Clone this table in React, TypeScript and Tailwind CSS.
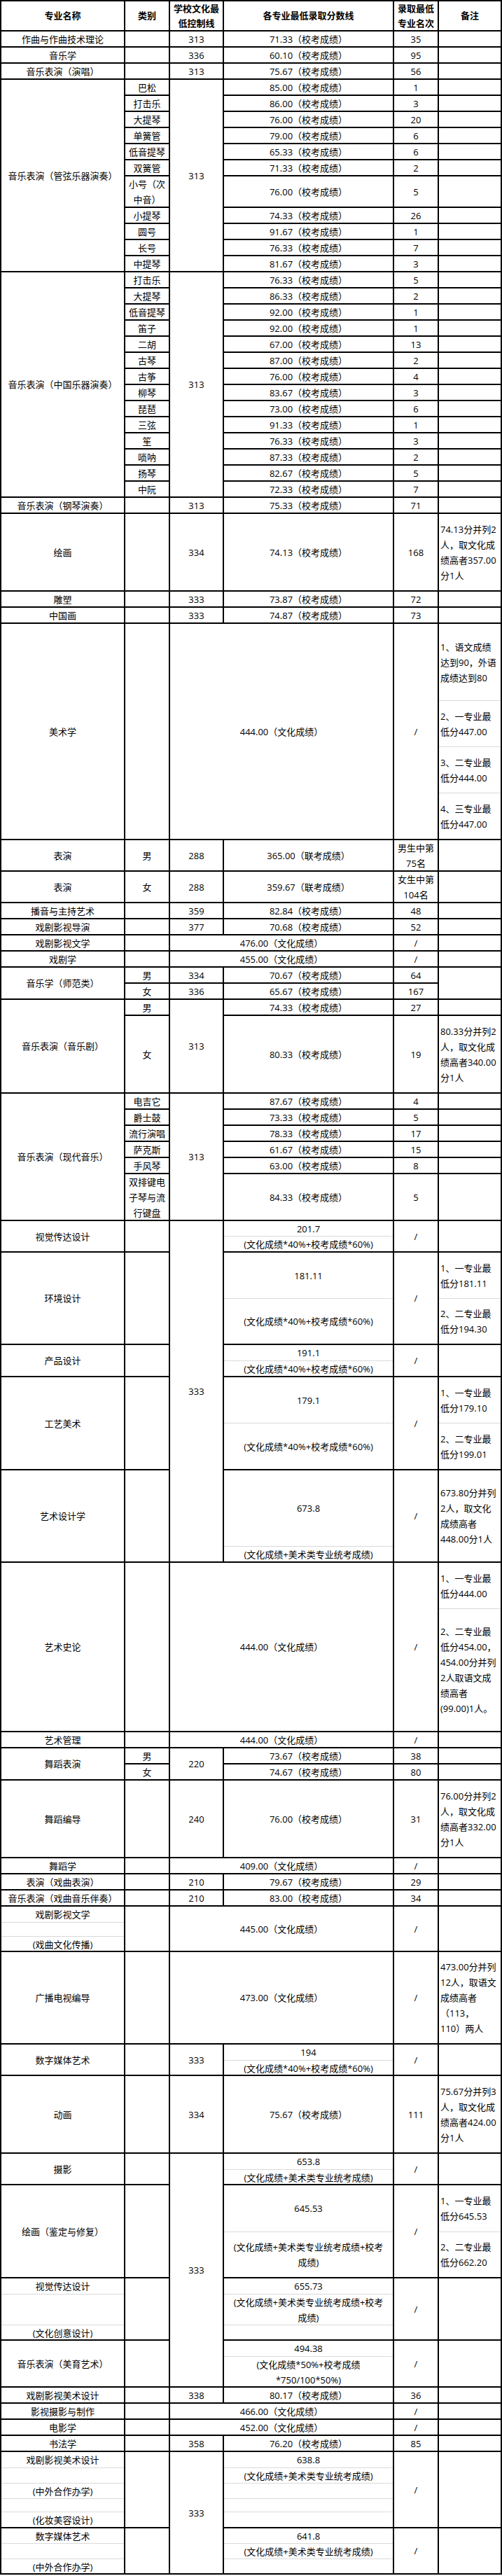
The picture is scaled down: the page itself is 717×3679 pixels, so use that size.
import React from "react";

const COLS = "grid grid-cols-[177px_64px_77px_243px_64px_90px]";
const CELL =
  "border-r-2 border-b-2 border-black flex flex-col items-center justify-center text-center whitespace-nowrap";
const NOTE =
  "border-r-2 border-b-2 border-black flex flex-col items-start justify-center text-left pl-[2px] whitespace-nowrap overflow-hidden";

const F40 = "(文化成绩*40%+校考成绩*60%)";
const FM = "(文化成绩+美术类专业统考成绩)";
const FMX = ["(文化成绩+美术类专业统考成绩+校考", "成绩)"];
const F50 = ["(文化成绩*50%+校考成绩", "*750/100*50%)"];

function L({ t }: { t: string[] }) {
  return (
    <>
      {t.map((s, i) => (
        <div key={i}>{s}</div>
      ))}
    </>
  );
}

type RowProps = {
  h: string;
  name: React.ReactNode;
  cat?: React.ReactNode;
  ctl?: string;
  score: string;
  rank: React.ReactNode;
  note?: string[];
  merged?: boolean;
};

function Row({ h, name, cat, ctl, score, rank, note, merged }: RowProps) {
  return (
    <div className={`${COLS} grid-rows-1 ${h}`}>
      <div className={CELL}>{name}</div>
      <div className={CELL}>{cat}</div>
      {merged ? (
        <div className={`${CELL} col-span-2`}>{score}</div>
      ) : (
        <>
          <div className={CELL}>{ctl}</div>
          <div className={CELL}>{score}</div>
        </>
      )}
      <div className={CELL}>{rank}</div>
      <div className={NOTE}>{note ? <L t={note} /> : null}</div>
    </div>
  );
}

type Sec = { h?: string; t?: string[] };

function Stack({ secs, note }: { secs: Sec[]; note?: boolean }) {
  return (
    <div className="border-r-2 border-b-2 border-black flex flex-col overflow-hidden">
      {secs.map((s, i) => {
        const last = i === secs.length - 1;
        return (
          <div
            key={i}
            className={`${last ? "flex-1" : `${s.h} shrink-0 border-b border-[#d9d9d9]`} flex flex-col justify-center whitespace-nowrap ${
              note ? "items-start pl-[2px] text-left" : "items-center text-center"
            }`}
          >
            {s.t ? <L t={s.t} /> : null}
          </div>
        );
      })}
    </div>
  );
}

const xk = (v: string) => v + "（校考成绩）";
const wh = (v: string) => v + "（文化成绩）";

const guan: [string[], string, string][] = [
  [["巴松"], "85.00", "1"],
  [["打击乐"], "86.00", "3"],
  [["大提琴"], "76.00", "20"],
  [["单簧管"], "79.00", "6"],
  [["低音提琴"], "65.33", "6"],
  [["双簧管"], "71.33", "2"],
  [["小号（次", "中音）"], "76.00", "5"],
  [["小提琴"], "74.33", "26"],
  [["圆号"], "91.67", "1"],
  [["长号"], "76.33", "7"],
  [["中提琴"], "81.67", "3"],
];

const zhong: [string, string, string][] = [
  ["打击乐", "76.33", "5"],
  ["大提琴", "86.33", "2"],
  ["低音提琴", "92.00", "1"],
  ["笛子", "92.00", "1"],
  ["二胡", "67.00", "13"],
  ["古琴", "87.00", "2"],
  ["古筝", "76.00", "4"],
  ["柳琴", "83.67", "3"],
  ["琵琶", "73.00", "6"],
  ["三弦", "91.33", "1"],
  ["笙", "76.33", "3"],
  ["唢呐", "87.33", "2"],
  ["扬琴", "82.67", "5"],
  ["中阮", "72.33", "7"],
];

const xiandai: [string[], string, string][] = [
  [["电吉它"], "87.67", "4"],
  [["爵士鼓"], "73.33", "5"],
  [["流行演唱"], "78.33", "17"],
  [["萨克斯"], "61.67", "15"],
  [["手风琴"], "63.00", "8"],
  [["双排键电", "子琴与流", "行键盘"], "84.33", "5"],
];

export default function App() {
  return (
    <div className="bg-white w-[717px] min-h-[3679px]">
      <div className="w-[717px] border-l-2 border-t-2 border-black text-black text-[13px] leading-[22px] font-['Open_Sans','Noto_Sans_CJK_SC',sans-serif]">
        {/* header */}
        <div className={`${COLS} grid-rows-1 h-[43px] font-bold leading-[21px]`}>
          <div className={CELL}>专业名称</div>
          <div className={CELL}>类别</div>
          <div className={CELL}>
            <div>学校文化最</div>
            <div>低控制线</div>
          </div>
          <div className={CELL}>各专业最低录取分数线</div>
          <div className={CELL}>
            <div>录取最低</div>
            <div>专业名次</div>
          </div>
          <div className={CELL}>备注</div>
        </div>

        <Row h="h-[23px]" name="作曲与作曲技术理论" ctl="313" score={xk("71.33")} rank="35" />
        <Row h="h-[23px]" name="音乐学" ctl="336" score={xk("60.10")} rank="95" />
        <Row h="h-[23px]" name="音乐表演（演唱）" ctl="313" score={xk("75.67")} rank="56" />

        {/* 管弦 */}
        <div className={`${COLS} grid-rows-[23px_23px_23px_23px_23px_23px_45px_23px_23px_23px_23px]`}>
          <div className={`${CELL} row-span-11`}>音乐表演（管弦乐器演奏）</div>
          {guan.map((r, i) => (
            <React.Fragment key={i}>
              <div className={CELL}>
                <L t={r[0]} />
              </div>
              {i === 0 && <div className={`${CELL} row-span-11`}>313</div>}
              <div className={CELL}>{xk(r[1])}</div>
              <div className={CELL}>{r[2]}</div>
              <div className={NOTE}></div>
            </React.Fragment>
          ))}
        </div>

        {/* 中国乐器 */}
        <div
          className={`${COLS} grid-rows-[23px_23px_23px_23px_23px_23px_23px_23px_23px_23px_23px_23px_23px_23px]`}
        >
          <div className={`${CELL} row-span-14`}>音乐表演（中国乐器演奏）</div>
          {zhong.map((r, i) => (
            <React.Fragment key={i}>
              <div className={CELL}>{r[0]}</div>
              {i === 0 && <div className={`${CELL} row-span-14`}>313</div>}
              <div className={CELL}>{xk(r[1])}</div>
              <div className={CELL}>{r[2]}</div>
              <div className={NOTE}></div>
            </React.Fragment>
          ))}
        </div>

        <Row h="h-[23px]" name="音乐表演（钢琴演奏）" ctl="313" score={xk("75.33")} rank="71" />
        <Row
          h="h-[111px]"
          name="绘画"
          ctl="334"
          score={xk("74.13")}
          rank="168"
          note={["74.13分并列2", "人，取文化成", "绩高者357.00", "分1人"]}
        />
        <Row h="h-[23px]" name="雕塑" ctl="333" score={xk("73.87")} rank="72" />
        <Row h="h-[23px]" name="中国画" ctl="333" score={xk("74.87")} rank="73" />

        {/* 美术学 */}
        <div className={`${COLS} grid-rows-1 h-[309px]`}>
          <div className={CELL}>美术学</div>
          <div className={CELL}></div>
          <div className={`${CELL} col-span-2`}>{wh("444.00")}</div>
          <div className={CELL}>/</div>
          <Stack
            note
            secs={[
              { h: "h-[110px]", t: ["1、语文成绩", "达到90，外语", "成绩达到80"] },
              { h: "h-[66px]", t: ["2、一专业最", "低分447.00"] },
              { h: "h-[66px]", t: ["3、二专业最", "低分444.00"] },
              { t: ["4、三专业最", "低分447.00"] },
            ]}
          />
        </div>

        <Row h="h-[45px]" name="表演" cat="男" ctl="288" score="365.00（联考成绩）" rank={<L t={["男生中第", "75名"]} />} />
        <Row h="h-[45px]" name="表演" cat="女" ctl="288" score="359.67（联考成绩）" rank={<L t={["女生中第", "104名"]} />} />
        <Row h="h-[23px]" name="播音与主持艺术" ctl="359" score={xk("82.84")} rank="48" />
        <Row h="h-[23px]" name="戏剧影视导演" ctl="377" score={xk("70.68")} rank="52" />
        <Row h="h-[23px]" name="戏剧影视文学" merged score={wh("476.00")} rank="/" />
        <Row h="h-[23px]" name="戏剧学" merged score={wh("455.00")} rank="/" />

        {/* 音乐学（师范类） */}
        <div className={`${COLS} grid-rows-[23px_23px]`}>
          <div className={`${CELL} row-span-2`}>音乐学（师范类）</div>
          <div className={CELL}>男</div>
          <div className={CELL}>334</div>
          <div className={CELL}>{xk("70.67")}</div>
          <div className={CELL}>64</div>
          <div className={`${NOTE} row-span-2`}></div>
          <div className={CELL}>女</div>
          <div className={CELL}>336</div>
          <div className={CELL}>{xk("65.67")}</div>
          <div className={CELL}>167</div>
        </div>

        {/* 音乐剧 */}
        <div className={`${COLS} grid-rows-[23px_111px]`}>
          <div className={`${CELL} row-span-2`}>音乐表演（音乐剧）</div>
          <div className={CELL}>男</div>
          <div className={`${CELL} row-span-2`}>313</div>
          <div className={CELL}>{xk("74.33")}</div>
          <div className={CELL}>27</div>
          <div className={NOTE}></div>
          <div className={CELL}>女</div>
          <div className={CELL}>{xk("80.33")}</div>
          <div className={CELL}>19</div>
          <div className={NOTE}>
            <L t={["80.33分并列2", "人，取文化成", "绩高者340.00", "分1人"]} />
          </div>
        </div>

        {/* 现代音乐 */}
        <div className={`${COLS} grid-rows-[23px_23px_23px_23px_23px_67px]`}>
          <div className={`${CELL} row-span-6`}>音乐表演（现代音乐）</div>
          {xiandai.map((r, i) => (
            <React.Fragment key={i}>
              <div className={CELL}>
                <L t={r[0]} />
              </div>
              {i === 0 && <div className={`${CELL} row-span-6`}>313</div>}
              <div className={CELL}>{xk(r[1])}</div>
              <div className={CELL}>{r[2]}</div>
              <div className={NOTE}></div>
            </React.Fragment>
          ))}
        </div>

        {/* design group */}
        <div className={`${COLS} grid-rows-[45px_132px_46px_133px_132px]`}>
          <div className={CELL}>视觉传达设计</div>
          <div className={CELL}></div>
          <div className={`${CELL} row-span-5`}>333</div>
          <Stack secs={[{ h: "h-[22px]", t: ["201.7"] }, { t: [F40] }]} />
          <div className={CELL}>/</div>
          <div className={NOTE}></div>

          <div className={CELL}>环境设计</div>
          <div className={CELL}></div>
          <Stack secs={[{ h: "h-[66px]", t: ["181.11"] }, { t: [F40] }]} />
          <div className={CELL}>/</div>
          <Stack
            note
            secs={[
              { h: "h-[66px]", t: ["1、一专业最", "低分181.11"] },
              { t: ["2、二专业最", "低分194.30"] },
            ]}
          />

          <div className={CELL}>产品设计</div>
          <div className={CELL}></div>
          <Stack secs={[{ h: "h-[23px]", t: ["191.1"] }, { t: [F40] }]} />
          <div className={CELL}>/</div>
          <div className={NOTE}></div>

          <div className={CELL}>工艺美术</div>
          <div className={CELL}></div>
          <Stack secs={[{ h: "h-[66px]", t: ["179.1"] }, { t: [F40] }]} />
          <div className={CELL}>/</div>
          <Stack
            note
            secs={[
              { h: "h-[66px]", t: ["1、一专业最", "低分179.10"] },
              { t: ["2、二专业最", "低分199.01"] },
            ]}
          />

          <div className={CELL}>艺术设计学</div>
          <div className={CELL}></div>
          <Stack secs={[{ h: "h-[109px]", t: ["673.8"] }, { t: [FM] }]} />
          <div className={CELL}>/</div>
          <div className={NOTE}>
            <L t={["673.80分并列", "2人，取文化", "成绩高者", "448.00分1人"]} />
          </div>
        </div>

        {/* 艺术史论 */}
        <div className={`${COLS} grid-rows-1 h-[242px]`}>
          <div className={CELL}>艺术史论</div>
          <div className={CELL}></div>
          <div className={`${CELL} col-span-2`}>{wh("444.00")}</div>
          <div className={CELL}>/</div>
          <Stack
            note
            secs={[
              { h: "h-[66px]", t: ["1、一专业最", "低分444.00"] },
              { t: ["2、二专业最", "低分454.00，", "454.00分并列", "2人取语文成", "绩高者", "(99.00)1人。"] },
            ]}
          />
        </div>

        <Row h="h-[23px]" name="艺术管理" merged score={wh("444.00")} rank="/" />

        {/* 舞蹈表演 */}
        <div className={`${COLS} grid-rows-[23px_23px]`}>
          <div className={`${CELL} row-span-2`}>舞蹈表演</div>
          <div className={CELL}>男</div>
          <div className={`${CELL} row-span-2`}>220</div>
          <div className={CELL}>{xk("73.67")}</div>
          <div className={CELL}>38</div>
          <div className={NOTE}></div>
          <div className={CELL}>女</div>
          <div className={CELL}>{xk("74.67")}</div>
          <div className={CELL}>80</div>
          <div className={NOTE}></div>
        </div>

        <Row
          h="h-[111px]"
          name="舞蹈编导"
          ctl="240"
          score={xk("76.00")}
          rank="31"
          note={["76.00分并列2", "人，取文化成", "绩高者332.00", "分1人"]}
        />
        <Row h="h-[23px]" name="舞蹈学" merged score={wh("409.00")} rank="/" />
        <Row h="h-[23px]" name="表演（戏曲表演）" ctl="210" score={xk("79.67")} rank="29" />
        <Row h="h-[23px]" name="音乐表演（戏曲音乐伴奏）" ctl="210" score={xk("83.00")} rank="34" />

        {/* 戏曲文化传播 */}
        <div className={`${COLS} grid-rows-1 h-[65px]`}>
          <Stack
            secs={[
              { h: "h-[23px]", t: ["戏剧影视文学"] },
              { h: "h-[20px]" },
              { t: ["(戏曲文化传播)"] },
            ]}
          />
          <div className={CELL}></div>
          <div className={`${CELL} col-span-2`}>{wh("445.00")}</div>
          <div className={CELL}>/</div>
          <div className={NOTE}></div>
        </div>

        <Row
          h="h-[132px]"
          name="广播电视编导"
          merged
          score={wh("473.00")}
          rank="/"
          note={["473.00分并列", "12人，取语文", "成绩高者", "（113，", "110）两人"]}
        />

        {/* 数字媒体艺术 */}
        <div className={`${COLS} grid-rows-1 h-[45px]`}>
          <div className={CELL}>数字媒体艺术</div>
          <div className={CELL}></div>
          <div className={CELL}>333</div>
          <Stack secs={[{ h: "h-[23px]", t: ["194"] }, { t: [F40] }]} />
          <div className={CELL}>/</div>
          <div className={NOTE}></div>
        </div>

        <Row
          h="h-[111px]"
          name="动画"
          ctl="334"
          score={xk("75.67")}
          rank="111"
          note={["75.67分并列3", "人，取文化成", "绩高者424.00", "分1人"]}
        />

        {/* photo group */}
        <div className={`${COLS} grid-rows-[45px_133px_89px_67px]`}>
          <div className={CELL}>摄影</div>
          <div className={CELL}></div>
          <div className={`${CELL} row-span-4`}>333</div>
          <Stack secs={[{ h: "h-[23px]", t: ["653.8"] }, { t: [FM] }]} />
          <div className={CELL}>/</div>
          <div className={NOTE}></div>

          <div className={CELL}>绘画（鉴定与修复）</div>
          <div className={CELL}></div>
          <Stack secs={[{ h: "h-[67px]", t: ["645.53"] }, { t: FMX }]} />
          <div className={CELL}>/</div>
          <Stack
            note
            secs={[
              { h: "h-[67px]", t: ["1、一专业最", "低分645.53"] },
              { t: ["2、二专业最", "低分662.20"] },
            ]}
          />

          <Stack
            secs={[
              { h: "h-[23px]", t: ["视觉传达设计"] },
              { h: "h-[44px]" },
              { t: ["(文化创意设计)"] },
            ]}
          />
          <div className={CELL}></div>
          <Stack secs={[{ h: "h-[23px]", t: ["655.73"] }, { h: "h-[44px]", t: FMX }, {}]} />
          <div className={CELL}>/</div>
          <div className={NOTE}></div>

          <div className={CELL}>音乐表演（美育艺术）</div>
          <div className={CELL}></div>
          <Stack secs={[{ h: "h-[23px]", t: ["494.38"] }, { t: F50 }]} />
          <div className={CELL}>/</div>
          <div className={NOTE}></div>
        </div>

        <Row h="h-[23px]" name="戏剧影视美术设计" ctl="338" score={xk("80.17")} rank="36" />
        <Row h="h-[23px]" name="影视摄影与制作" merged score={wh("466.00")} rank="/" />
        <Row h="h-[23px]" name="电影学" merged score={wh("452.00")} rank="/" />
        <Row h="h-[23px]" name="书法学" ctl="358" score={xk("76.20")} rank="85" />

        {/* final group */}
        <div className={`${COLS} grid-rows-[109px_66px]`}>
          <Stack
            secs={[
              { h: "h-[23px]", t: ["戏剧影视美术设计"] },
              { h: "h-[22px]" },
              { h: "h-[22px]", t: ["(中外合作办学)"] },
              { h: "h-[19px]" },
              { t: ["(化妆美容设计)"] },
            ]}
          />
          <div className={CELL}></div>
          <div className={`${CELL} row-span-2`}>333</div>
          <Stack
            secs={[
              { h: "h-[23px]", t: ["638.8"] },
              { h: "h-[22px]", t: [FM] },
              { h: "h-[22px]" },
              { h: "h-[19px]" },
              {},
            ]}
          />
          <div className={CELL}>/</div>
          <div className={NOTE}></div>

          <Stack
            secs={[
              { h: "h-[22px]", t: ["数字媒体艺术"] },
              { h: "h-[22px]" },
              { t: ["(中外合作办学)"] },
            ]}
          />
          <div className={CELL}></div>
          <Stack secs={[{ h: "h-[22px]", t: ["641.8"] }, { h: "h-[22px]", t: [FM] }, {}]} />
          <div className={CELL}>/</div>
          <div className={NOTE}></div>
        </div>
      </div>
    </div>
  );
}
